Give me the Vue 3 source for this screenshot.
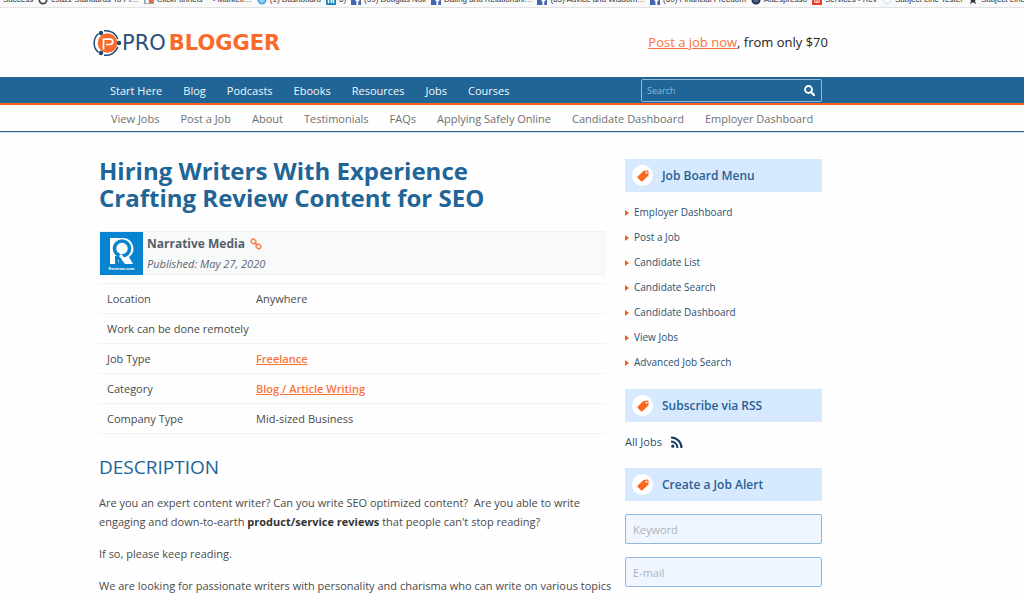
<template>
  <div class="page">
    <div class="bookmarks">
      <a v-for="(b, i) in bookmarks" :key="i" href="#" class="bookmark">
        <svg v-if="b.kind === 'fb'" class="favicon" viewBox="0 0 11 11">
          <rect width="11" height="11" fill="#4267b2" />
          <path d="M6 11V7H5V5h1V4q0-2 2-2h1v2H8v1h1.500L9 7H8v4z" fill="#fff" />
        </svg>
        <svg v-else-if="b.kind === 'in'" class="favicon" viewBox="0 0 11 11">
          <rect width="11" height="11" rx="1" fill="#1683bb" />
          <path d="M2 4h1.500v5H2zM5 4h1.500v5H5zM7 4h2v5H7.600z" fill="#fff" />
        </svg>
        <svg v-else-if="b.kind === 'red'" class="favicon" viewBox="0 0 11 11">
          <rect width="11" height="11" fill="#ee3b2b" />
          <path d="M3 3v5h5V3M5.500 4v4" fill="none" stroke="#fff" />
        </svg>
        <svg v-else-if="b.kind === 'funnel'" class="favicon" viewBox="0 0 11 11">
          <rect width="11" height="10" fill="#9aa5b5" />
          <path d="M2 9V3h3v6z" fill="#fff" />
          <path d="M6 9V3h4v6z" fill="#e8644a" />
        </svg>
        <svg v-else-if="b.kind === 'star'" class="favicon" viewBox="0 0 11 11">
          <path d="M5.500 1 7 4h3L7.500 6.500 9 10 5.500 8 2 10l1.500-3.500L1 4h3z" fill="#333" />
        </svg>
        <svg v-else-if="b.kind" class="favicon" viewBox="0 0 11 11">
          <circle cx="5.500" cy="5.500" r="4" :fill="b.fill" :stroke="b.stroke" stroke-width="2" />
        </svg>
        <span>{{ b.text }}</span>
      </a>
    </div>

    <header class="header wrap">
      <a href="#" class="logo">
        <svg width="29" height="30" viewBox="0 0 29 30">
          <circle cx="14.500" cy="15" r="9.800" fill="#f96a2b" />
          <path
            d="M10.500 21.500V11.100h6.500a2.700 2.700 0 0 1 0 5.400H13"
            fill="none" stroke="#fff" stroke-width="1.700"
          />
          <g fill="none" stroke="#1c4a78" stroke-width="1.500">
            <path d="M11 2.800A12.500 12.500 0 0 1 24.800 11" />
            <path d="M24.800 19A12.500 12.500 0 0 1 11 27.200" />
            <path d="M5.500 5.500A12.500 12.500 0 0 0 5.500 24.500" />
          </g>
          <g fill="#1c4a78">
            <circle cx="8" cy="5" r="2.200" />
            <circle cx="26" cy="15" r="2.200" />
            <circle cx="8" cy="25" r="2.200" />
          </g>
        </svg>
        <span class="logo-text">PRO<b>BLOGGER</b></span>
      </a>
      <p class="promo"><a href="#">Post a job now</a>, from only $70</p>
    </header>

    <nav class="main-nav">
      <div class="wrap nav-row">
        <ul>
          <li v-for="item in mainNav" :key="item"><a href="#">{{ item }}</a></li>
        </ul>
        <form class="search" @submit.prevent>
          <input v-model="query" type="text" placeholder="Search" aria-label="Search" />
          <button type="submit" aria-label="Search">
            <svg width="11" height="11" viewBox="0 0 11 11">
              <circle cx="4.500" cy="4.500" r="3.500" fill="none" stroke="#fff" stroke-width="1.800" />
              <path d="M7 7l3 3" stroke="#fff" stroke-width="2.200" stroke-linecap="round" />
            </svg>
          </button>
        </form>
      </div>
    </nav>

    <nav class="sub-nav">
      <ul class="wrap">
        <li v-for="item in subNav" :key="item"><a href="#">{{ item }}</a></li>
      </ul>
    </nav>

    <div class="wrap content">
      <main>
        <h1>Hiring Writers With Experience Crafting Review Content for SEO</h1>

        <div class="company">
          <svg width="43" height="43" viewBox="0 0 43 43">
            <rect width="43" height="43" fill="#0783cf" />
            <path d="M10 6h13a10.500 10.500 0 0 1 6 19l4 7h-8l-4-5h-2l-1 5h-8z" fill="#fff" />
            <circle cx="22" cy="16.500" r="7.500" fill="none" stroke="#0783cf" stroke-width="3.600" />
            <path d="M15 24l7 0v4h-4v4h-3z" fill="#0783cf" />
            <path d="M20 23l6 7" stroke="#fff" stroke-width="3" />
            <text x="21.500" y="37.500" text-anchor="middle" class="thumb-text">Reviews.com</text>
          </svg>
          <div>
            <strong>
              Narrative Media
              <a href="#" aria-label="Company website">
                <svg width="12" height="12" viewBox="0 0 12 12">
                  <g fill="none" stroke="#fb7f4e" stroke-width="1.500">
                    <rect x="1" y="1.500" width="5" height="4" rx="2" transform="rotate(40 3.500 3.500)" />
                    <rect x="6" y="6.500" width="5" height="4" rx="2" transform="rotate(40 8.500 8.500)" />
                    <path d="M4.500 4.500l3 3" />
                  </g>
                </svg>
              </a>
            </strong>
            <em>Published: May 27, 2020</em>
          </div>
        </div>

        <table>
          <tbody>
            <tr v-for="row in details" :key="row.label">
              <th scope="row" :colspan="row.value ? 1 : 2">{{ row.label }}</th>
              <td v-if="row.value">
                <a v-if="row.link" href="#">{{ row.value }}</a>
                <template v-else>{{ row.value }}</template>
              </td>
            </tr>
          </tbody>
        </table>

        <h2>DESCRIPTION</h2>
        <p>
          Are you an expert content writer? Can you write SEO optimized content?&nbsp; Are you able to write
          engaging and down-to-earth <strong>product/service reviews</strong> that people can't stop reading?
        </p>
        <p>If so, please keep reading.</p>
        <p>We are looking for passionate writers with personality and charisma who can write on various topics</p>
      </main>

      <aside>
        <section v-for="box in boxes" :key="box.title">
          <h3>
            <span class="badge">
              <svg width="12" height="12" viewBox="0 0 12 12">
                <path
                  fill-rule="evenodd"
                  d="M6.500 1 10.500.5q1 0 1 1L11.500 5.500 5.500 11.200q-.7.600-1.400 0L.7 8q-.7-.7 0-1.400zM9.500 1.800a1 1 0 1 0 0 2 1 1 0 1 0 0-2z"
                  fill="#fd661f"
                />
              </svg>
            </span>
            {{ box.title }}
          </h3>

          <ul v-if="box.type === 'menu'" class="menu">
            <li v-for="item in menu" :key="item"><a href="#">{{ item }}</a></li>
          </ul>

          <a v-else-if="box.type === 'rss'" href="#" class="rss">
            All Jobs
            <svg width="12" height="12" viewBox="0 0 12 12">
              <circle cx="1.800" cy="10.200" r="1.600" fill="#153a60" />
              <g fill="none" stroke="#153a60" stroke-width="2">
                <path d="M0 5.500A6.500 6.500 0 0 1 6.500 12" />
                <path d="M0 1.500A10.500 10.500 0 0 1 10.500 12" />
              </g>
            </svg>
          </a>

          <form v-else class="alert" @submit.prevent>
            <input v-model="keyword" type="text" placeholder="Keyword" aria-label="Keyword" />
            <input v-model="email" type="email" placeholder="E-mail" aria-label="E-mail" />
          </form>
        </section>
      </aside>
    </div>
  </div>
</template>

<script setup>
import { ref } from 'vue';

const query = ref('');
const keyword = ref('');
const email = ref('');

const bookmarks = [
  { text: 'Success' },
  { kind: 'dot', fill: '#fff', stroke: '#444', text: 'eJazz Standards To Pl…' },
  { kind: 'funnel', text: 'ClickFunnels™ - Marketi…' },
  { kind: 'dot', fill: '#8fd0f5', stroke: '#4aa9e0', text: '(1) Dashboard' },
  { kind: 'in', text: '6)' },
  { kind: 'fb', text: '(59) Douglas Noll' },
  { kind: 'fb', text: 'Dating and Relationshi…' },
  { kind: 'fb', text: '(65) Advice and Wisdom…' },
  { kind: 'fb', text: '(60) Financial Freedom' },
  { kind: 'dot', fill: '#4c6a86', stroke: '#1c3450', text: 'AdEspresso' },
  { kind: 'red', text: 'Services - Rev' },
  { kind: 'dot', fill: '#fff', stroke: '#dbe9f7', text: 'Subject Line Tester' },
  { kind: 'star', text: 'Subject Line Grader' }
];

const mainNav = ['Start Here', 'Blog', 'Podcasts', 'Ebooks', 'Resources', 'Jobs', 'Courses'];

const subNav = [
  'View Jobs',
  'Post a Job',
  'About',
  'Testimonials',
  'FAQs',
  'Applying Safely Online',
  'Candidate Dashboard',
  'Employer Dashboard'
];

const details = [
  { label: 'Location', value: 'Anywhere' },
  { label: 'Work can be done remotely' },
  { label: 'Job Type', value: 'Freelance', link: true },
  { label: 'Category', value: 'Blog / Article Writing', link: true },
  { label: 'Company Type', value: 'Mid-sized Business' }
];

const boxes = [
  { title: 'Job Board Menu', type: 'menu' },
  { title: 'Subscribe via RSS', type: 'rss' },
  { title: 'Create a Job Alert', type: 'alert' }
];

const menu = [
  'Employer Dashboard',
  'Post a Job',
  'Candidate List',
  'Candidate Search',
  'Candidate Dashboard',
  'View Jobs',
  'Advanced Job Search'
];
</script>

<style>
body {
  margin: 0;
  background: #fefefe;
}
</style>

<style scoped>
.page {
  font-family: "Open Sans", "Noto Sans", sans-serif;
  font-size: 11px;
  color: #4a4a4a;
  overflow: hidden;
}

.page * {
  box-sizing: border-box;
}

a {
  color: inherit;
  text-decoration: none;
}

ul {
  list-style: none;
  margin: 0;
  padding: 0;
}

input,
button {
  font-family: inherit;
}

.wrap {
  padding: 0 202px 0 99px;
}

.bookmarks {
  display: flex;
  align-items: flex-end;
  gap: 5px;
  height: 8px;
  padding: 0 0 2px 3px;
  border-bottom: 1px solid #e2e2e2;
  background: #f9f9f9;
  overflow: hidden;
}

.bookmark {
  display: flex;
  flex: none;
  align-items: center;
  gap: 3px;
  font-family: "Liberation Sans", sans-serif;
  font-size: 8px;
  line-height: 10px;
  color: #333;
  white-space: nowrap;
}

.favicon {
  width: 10px;
  height: 10px;
}

.header {
  display: flex;
  align-items: center;
  justify-content: space-between;
  height: 69px;
  padding-left: 93px;
  padding-right: 196px;
}

.logo {
  display: flex;
  align-items: center;
}

.logo-text {
  font-family: "DejaVu Sans", sans-serif;
  font-size: 21px;
  line-height: 24px;
  color: #2c5079;
}

.logo-text b {
  margin-left: 3px;
  color: #f96a2b;
}

.promo {
  margin: 0;
  font-size: 13px;
  color: #222;
}

.promo a {
  color: #fc713a;
  text-decoration: underline;
}

.main-nav {
  background: #216496;
  border-bottom: 2px solid #f9611f;
}

.nav-row {
  display: flex;
  align-items: center;
  justify-content: space-between;
  height: 26px;
}

.main-nav ul {
  display: flex;
  gap: 21px;
  padding-left: 11px;
  color: #f2f7fb;
}

.search {
  display: flex;
  width: 181px;
  height: 23px;
  border: 1px solid #8db9dc;
  border-radius: 2px;
}

.search input {
  flex: 1;
  min-width: 0;
  padding: 0 5px;
  border: 0;
  background: none;
  font-size: 9px;
  color: #fff;
}

.search input::placeholder {
  color: #8fb8d8;
}

.search button {
  display: flex;
  align-items: center;
  padding: 0 6px;
  border: 0;
  background: none;
}

.sub-nav {
  border-bottom: 1px solid #216496;
  box-shadow: 0 1px 0 #d5e4f2;
}

.sub-nav ul {
  display: flex;
  align-items: center;
  gap: 21px;
  height: 26px;
  padding-left: 111px;
  color: #707070;
  white-space: nowrap;
}

.content {
  display: flex;
  gap: 8px;
  padding-top: 25px;
}

main {
  flex: 1;
  min-width: 0;
}

h1 {
  max-width: 420px;
  margin: 0 0 20px;
  font-size: 24px;
  line-height: 27px;
  color: #216496;
}

.company {
  display: flex;
  gap: 4px;
  height: 44px;
  margin: 0 12px 8px 0;
  padding-left: 1px;
  border: 1px solid #f1f2f2;
  border-left: 0;
  background: #f8f9f9;
}

.company strong,
.company em {
  display: block;
  line-height: 20px;
  color: #5b6673;
}

.company strong {
  padding-top: 2px;
  font-size: 12px;
  color: #55606e;
}

.company strong a {
  margin-left: 2px;
}

.company strong svg {
  vertical-align: -2px;
}

.thumb-text {
  font-size: 4px;
  font-weight: 700;
  fill: #fff;
}

table {
  width: calc(100% - 12px);
  margin-bottom: 20px;
  border-collapse: collapse;
  border-top: 1px solid #f3f3f3;
}

th,
td {
  height: 30px;
  padding: 0;
  border-bottom: 1px solid #f3f3f3;
  font-weight: 400;
  text-align: left;
}

th {
  width: 157px;
  padding-left: 8px;
}

td a {
  font-weight: 600;
  color: #fc713a;
  text-decoration: underline;
}

h2 {
  margin: 0 0 12px;
  font-size: 19px;
  font-weight: 400;
  line-height: 27px;
  color: #216496;
}

p {
  margin: 0 0 13px;
  line-height: 19px;
}

main p:last-child {
  margin-bottom: 0;
}

p strong {
  color: #333;
}

aside {
  width: 197px;
  padding-top: 2px;
}

h3 {
  display: flex;
  align-items: center;
  gap: 9px;
  height: 33px;
  margin: 0;
  padding-left: 7px;
  background: #d7e9ff;
  font-size: 12px;
  font-weight: 600;
  color: #296192;
}

.badge {
  display: flex;
  align-items: center;
  justify-content: center;
  width: 21px;
  height: 21px;
  border-radius: 50%;
  background: #fff;
}

.menu {
  padding: 8px 0 14px;
  font-size: 10px;
  line-height: 25px;
  color: #2c4f70;
}

.menu li {
  display: flex;
  align-items: center;
  gap: 5px;
}

.menu li::before {
  content: "";
  border: 3px solid transparent;
  border-left: 4px solid #fb5a14;
  border-right: 0;
}

.rss {
  display: flex;
  align-items: center;
  gap: 9px;
  padding: 10px 0 16px;
  line-height: 20px;
  color: #2c4f70;
}

.alert {
  display: flex;
  flex-direction: column;
  gap: 13px;
  padding-top: 13px;
}

.alert input {
  height: 30px;
  padding: 0 7px;
  border: 1px solid #8fbade;
  border-radius: 2px;
  background: #eff6ff;
  font-size: 11px;
}

.alert input::placeholder {
  color: #acb3bb;
}
</style>
